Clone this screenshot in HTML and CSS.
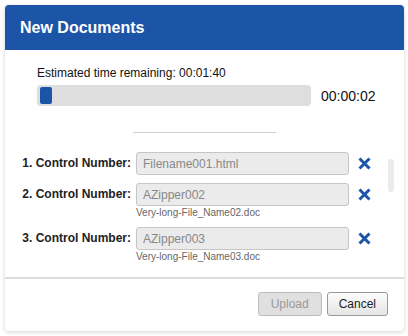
FILE: index.html
```html
<!DOCTYPE html>
<html lang="en">
<head>
    <meta charset="UTF-8">
    <meta name="viewport" content="width=device-width, initial-scale=1.0">
    <title>New Documents</title>
    <link rel="stylesheet" href="styles.css">
</head>
<body>
    <div class="dialog">
        <header class="dialog-header">
            <h1>New Documents</h1>
        </header>

        <div class="dialog-body">
            <!-- Upload progress -->
            <section class="progress">
                <div class="progress-label">Estimated time remaining: 00:01:40</div>
                <div class="progress-row">
                    <div class="progress-track">
                        <div class="progress-fill" style="width: 4.5%"></div>
                    </div>
                    <span class="elapsed">00:00:02</span>
                </div>
            </section>

            <hr class="divider">

            <!-- Document list with its scrollbar -->
            <div class="list-wrap">
                <ul class="doc-list">
                    <li class="doc-row">
                        <label class="doc-label">1. Control Number:</label>
                        <div class="doc-field">
                            <input class="doc-input" type="text" value="Filename001.html" disabled>
                        </div>
                        <button class="remove" title="Remove">
                            <svg width="13" height="13" viewBox="0 0 13 13"><path d="M1.5 1.5 L11.5 11.5 M11.5 1.5 L1.5 11.5" stroke="#1c55a8" stroke-width="3" fill="none"/></svg>
                        </button>
                    </li>
                    <li class="doc-row">
                        <label class="doc-label">2. Control Number:</label>
                        <div class="doc-field">
                            <input class="doc-input" type="text" value="AZipper002" disabled>
                            <div class="doc-file">Very-long-File_Name02.doc</div>
                        </div>
                        <button class="remove" title="Remove">
                            <svg width="13" height="13" viewBox="0 0 13 13"><path d="M1.5 1.5 L11.5 11.5 M11.5 1.5 L1.5 11.5" stroke="#1c55a8" stroke-width="3" fill="none"/></svg>
                        </button>
                    </li>
                    <li class="doc-row">
                        <label class="doc-label">3. Control Number:</label>
                        <div class="doc-field">
                            <input class="doc-input" type="text" value="AZipper003" disabled>
                            <div class="doc-file">Very-long-File_Name03.doc</div>
                        </div>
                        <button class="remove" title="Remove">
                            <svg width="13" height="13" viewBox="0 0 13 13"><path d="M1.5 1.5 L11.5 11.5 M11.5 1.5 L1.5 11.5" stroke="#1c55a8" stroke-width="3" fill="none"/></svg>
                        </button>
                    </li>
                </ul>
                <div class="scrollbar">
                    <div class="scroll-thumb"></div>
                </div>
            </div>
        </div>

        <footer class="dialog-footer">
            <button class="btn" disabled>Upload</button>
            <button class="btn">Cancel</button>
        </footer>
    </div>
</body>
</html>
```

FILE: styles.css
```css
body {
    margin: 0;
    padding: 5px;
    background-color: #fff;
    font-family: "Liberation Sans", Arial, sans-serif;
    color: #222;
}
.dialog {
    width: 399px;
    height: 326px;
    display: flex;
    flex-direction: column;
    background-color: #fff;
    border-radius: 4px;
    box-shadow: 0 1px 4px rgba(0, 0, 0, 0.18);
    overflow: hidden;
}
.dialog-header {
    height: 45px;
    flex: none;
    display: flex;
    align-items: center;
    padding: 0 15px;
    background-color: #1c55a8;
}
.dialog-header h1 {
    margin: 0;
    font-size: 16px;
    font-weight: bold;
    color: #fff;
}
.dialog-body {
    flex: 1;
    min-height: 0;
    display: flex;
    flex-direction: column;
    padding-bottom: 9px;
}
.progress {
    padding: 16px 20px 0 32px;
}
.progress-label {
    font-size: 12px;
    line-height: 14px;
    color: #111;
}
.progress-row {
    display: flex;
    align-items: center;
    gap: 10px;
    margin-top: 5px;
}
.progress-track {
    width: 274px;
    height: 21px;
    flex: none;
    box-sizing: border-box;
    padding: 2px 3px;
    background-color: #dedede;
    border-radius: 4px;
}
.progress-fill {
    height: 100%;
    background-color: #1c55a8;
    border-radius: 2px;
}
.elapsed {
    font-size: 14px;
    color: #111;
}
.divider {
    width: 143px;
    margin: 26px auto 0;
    border: none;
    border-top: 1px solid #cfcfcf;
}
.list-wrap {
    flex: 1;
    min-height: 0;
    display: flex;
    margin-right: 10px;
}
.doc-list {
    flex: 1;
    overflow: hidden;
    list-style-type: none;
    margin: 0;
    padding: 19px 0 0 16px;
}
.scrollbar {
    width: 6px;
    padding-top: 26px;
}
.scroll-thumb {
    height: 33px;
    background-color: #ebebeb;
    border-radius: 3px;
}
.doc-row {
    display: flex;
    align-items: flex-start;
    margin-bottom: 8px;
}
.doc-label {
    width: 110px;
    flex: none;
    height: 23px;
    line-height: 23px;
    text-align: right;
    font-size: 12px;
    font-weight: bold;
    color: #222;
}
.doc-field {
    margin-left: 5px;
    width: 213px;
}
.doc-input {
    display: block;
    width: 100%;
    height: 23px;
    box-sizing: border-box;
    margin: 0;
    padding: 0 6px;
    font-family: "Liberation Sans", Arial, sans-serif;
    font-size: 12px;
    color: #888;
    background-color: #ebebeb;
    border: 1px solid #c6c6c6;
    border-radius: 3px;
}
.doc-file {
    font-size: 10px;
    line-height: 13px;
    color: #666;
}
.remove {
    margin-left: 9px;
    width: 13px;
    height: 23px;
    padding: 0;
    border: none;
    background: none;
    display: flex;
    align-items: center;
    cursor: pointer;
}
.dialog-footer {
    flex: none;
    display: flex;
    justify-content: flex-end;
    gap: 5px;
    padding: 13px 16px 15px;
    border-top: 2px solid #dcdcdc;
}
.btn {
    height: 24px;
    padding: 0 11px;
    font-family: "Liberation Sans", Arial, sans-serif;
    font-size: 12px;
    color: #222;
    background: linear-gradient(#fdfdfd, #e4e4e4);
    border: 1px solid #9a9a9a;
    border-radius: 3px;
    cursor: pointer;
}
.btn:disabled {
    min-width: 64px;
    color: #9a9a9a;
    background: #e0e0e0;
    border-color: #bdbdbd;
    cursor: default;
}
```
